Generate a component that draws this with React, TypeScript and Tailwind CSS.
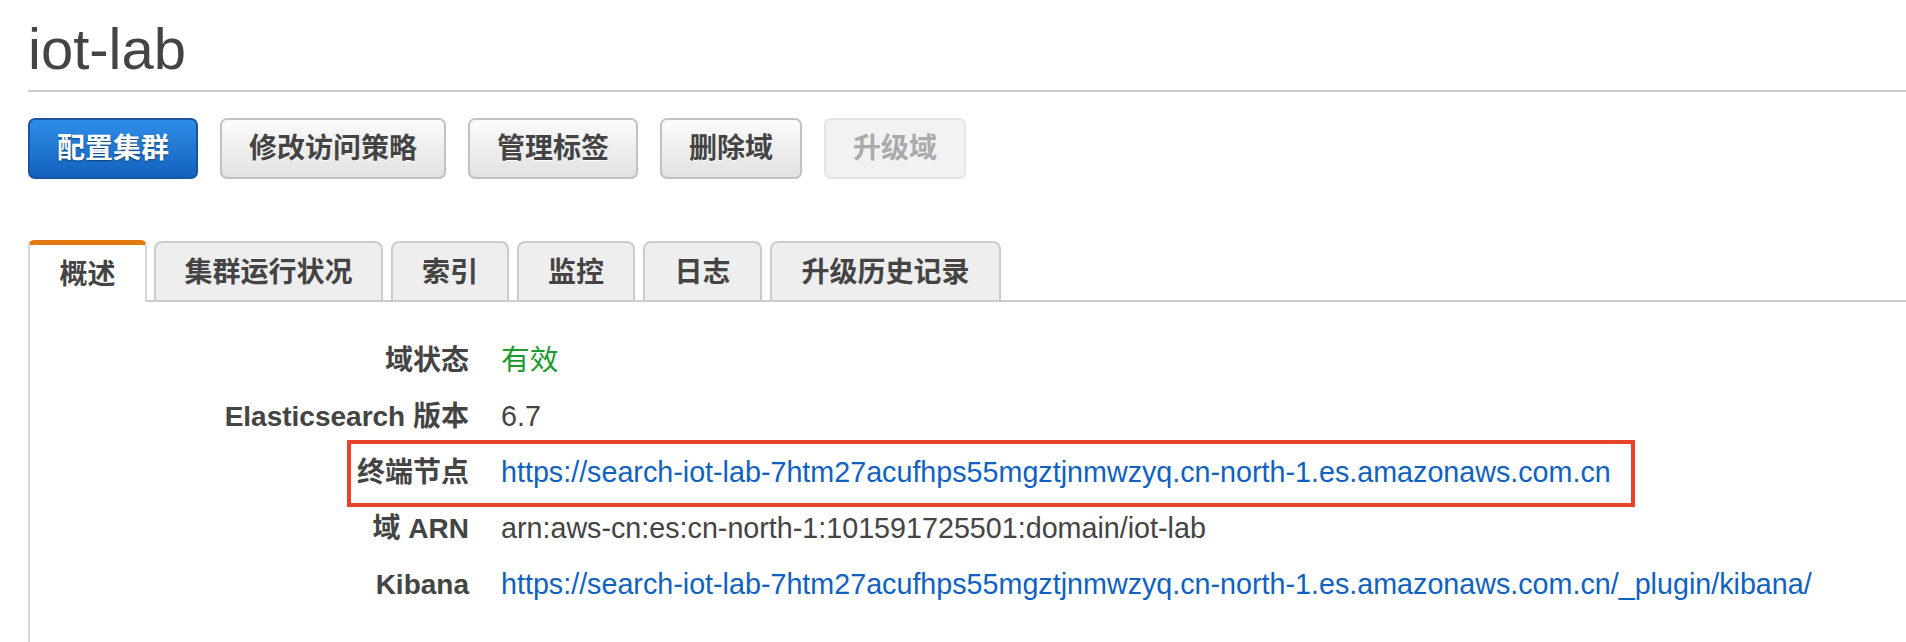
import React from "react";
import clsx from "clsx";

const buttons = [
  { label: "配置集群", kind: "primary" },
  { label: "修改访问策略", kind: "default" },
  { label: "管理标签", kind: "default" },
  { label: "删除域", kind: "default" },
  { label: "升级域", kind: "disabled" },
];

const tabs = [
  { label: "集群运行状况", w: "w-[229px]" },
  { label: "索引", w: "w-[118px]" },
  { label: "监控", w: "w-[118px]" },
  { label: "日志", w: "w-[119px]" },
  { label: "升级历史记录", w: "w-[231px]" },
];

const rows: { label: string; value: string; tone: "text" | "link" | "ok"; marked?: boolean }[] = [
  { label: "域状态", value: "有效", tone: "ok" },
  { label: "Elasticsearch 版本", value: "6.7", tone: "text" },
  {
    label: "终端节点",
    value: "https://search-iot-lab-7htm27acufhps55mgztjnmwzyq.cn-north-1.es.amazonaws.com.cn",
    tone: "link",
    marked: true,
  },
  { label: "域 ARN", value: "arn:aws-cn:es:cn-north-1:101591725501:domain/iot-lab", tone: "text" },
  {
    label: "Kibana",
    value: "https://search-iot-lab-7htm27acufhps55mgztjnmwzyq.cn-north-1.es.amazonaws.com.cn/_plugin/kibana/",
    tone: "link",
  },
];

function ActionButton({ label, kind }: { label: string; kind: string }) {
  return (
    <button
      className={clsx([
        "h-[61px] px-[27px] rounded-[7px] border-2 text-[28px] leading-[28px] font-bold",
        kind === "primary" &&
          "bg-linear-to-b from-[#2f8ee8] to-[#1262bd] border-[#1b55a0] text-white [text-shadow:0_1px_2px_rgba(0,0,0,0.45)]",
        kind === "default" &&
          "bg-linear-to-b from-[#fbfbfb] to-[#e2e2e2] border-[#c2c2c2] text-[#444] [text-shadow:0_1px_0_rgba(255,255,255,0.9)]",
        kind === "disabled" && "bg-[#f2f2f2] border-[#e4e4e4] text-[#aaa]",
      ])}
    >
      {label}
    </button>
  );
}

export default function App() {
  return (
    <div className="min-h-[642px] bg-white pl-[28px] text-[#444] font-['Liberation_Sans','Noto_Sans_CJK_SC',sans-serif]">
      <h1 className="pt-[17px] pb-[9px] text-[58px] leading-[64px] font-normal border-b-2 border-[#cccccc]">
        iot-lab
      </h1>

      <div className="mt-[26px] flex gap-[22px]">
        {buttons.map((b) => (
          <ActionButton key={b.label} label={b.label} kind={b.kind} />
        ))}
      </div>

      {/* tabs */}
      <div className="mt-[61px] flex items-end">
        <div className="h-[62px] w-[119px] pt-[3px] flex items-center justify-center bg-white border-t-[5px] border-t-[#e47911] border-x-2 border-x-[#d6d6d6] rounded-t-[6px] text-[28px] font-bold">
          概述
        </div>
        <div className="flex-1 flex gap-[8px] pl-[7px] border-b-2 border-[#cccccc]">
          {tabs.map((t) => (
            <div
              key={t.label}
              className={clsx([
                t.w,
                "h-[59px] pt-[3px] flex items-center justify-center bg-[#eeeeee] border-2 border-b-0 border-[#cccccc] rounded-t-[8px] text-[28px] font-bold",
              ])}
            >
              {t.label}
            </div>
          ))}
        </div>
      </div>

      <div className="min-h-[340px] border-l-2 border-[#d6d6d6] pt-[31px]">
        {rows.map((r) => (
          <div key={r.label} className="relative flex h-[56px] items-center">
            <div className="w-[439px] text-right text-[28px] font-bold">{r.label}</div>
            <div
              className={clsx([
                "ml-[32px] whitespace-nowrap text-[28.7px]",
                r.tone === "link" && "text-[#0f62c0]",
                r.tone === "ok" && "text-[#1d9a2e]",
              ])}
            >
              {r.value}
            </div>
            {r.marked && (
              <div className="absolute left-[317px] top-[-5px] bottom-[-6px] w-[1288px] border-4 border-[#e8412c]" />
            )}
          </div>
        ))}
      </div>
    </div>
  );
}
